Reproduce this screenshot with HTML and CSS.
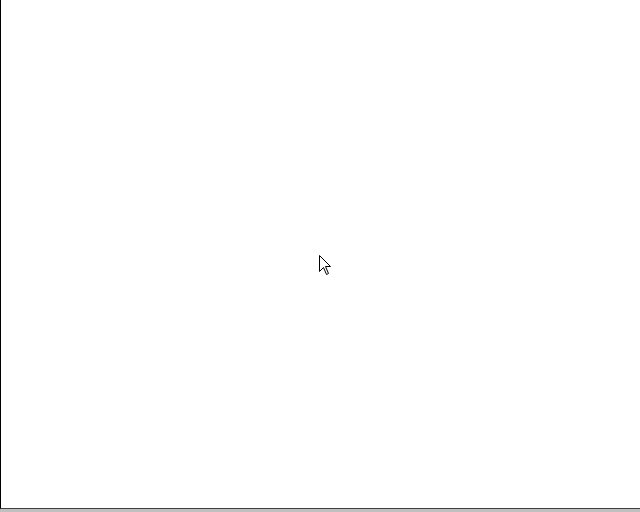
FILE: index.html
```html
<!DOCTYPE html>
<html lang="en">
<head>
    <meta charset="UTF-8">
    <title>Blank</title>
    <link rel="stylesheet" href="styles.css">
</head>
<body>
<div class="screen">
    <div class="canvas"></div>
    <div class="status-strip"></div>

    <!-- mouse pointer over the canvas -->
    <svg class="pointer" width="13" height="21" viewBox="0 0 13 21">
        <path d="M0.5 0.5 L0.5 16.5 L4.5 12.5 L7.5 19.5 L9.5 18.5 L6.5 11.5 L11.5 11.5 Z"
              fill="#fff" stroke="#000" stroke-width="1" stroke-linejoin="miter"/>
    </svg>
</div>
</body>
</html>
```

FILE: styles.css
```css
html, body {
    margin: 0;
    padding: 0;
    background-color: #fff;
}
.screen {
    position: relative;
    width: 640px;
    height: 512px;
    display: flex;
    flex-direction: column;
    overflow: hidden;
}
.canvas {
    flex: 1;
    background-color: #fff;
    border-left: 1px solid #000;
    border-bottom: 1px solid #404040;
}
.status-strip {
    height: 3px;
    background-color: #c0c0c0;
}
.pointer {
    position: absolute;
    left: 319px;
    top: 255px;
}
```
